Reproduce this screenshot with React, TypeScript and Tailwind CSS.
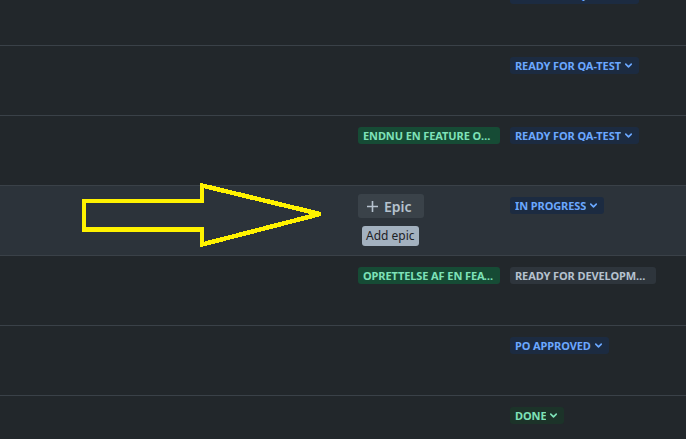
import { ChevronDown } from "lucide-react";

type Row = {
  epic?: string;
  status: string;
  tone: "blue" | "green" | "grey";
  chevron?: boolean;
  hover?: boolean;
};

const rows: Row[] = [
  { status: "Ready for QA-test", tone: "blue", chevron: true },
  { status: "Ready for QA-test", tone: "blue", chevron: true },
  { epic: "Endnu en feature omkring noget", status: "Ready for QA-test", tone: "blue", chevron: true },
  { status: "In progress", tone: "blue", chevron: true, hover: true },
  { epic: "Oprettelse af en feature", status: "Ready for development", tone: "grey" },
  { status: "PO approved", tone: "blue", chevron: true },
  { status: "Done", tone: "green", chevron: true },
];

const toneClass = {
  blue: "bg-[#1c2b41] text-[#6ba8ff]",
  green: "bg-[#1c3329] text-[#7ee2b8]",
  grey: "bg-[#2e353c] text-[#b6c2cf]",
};

function StatusLozenge({ row }: { row: Row }) {
  return (
    <span
      className={`flex h-[17px] max-w-[146px] items-center gap-[2px] rounded-[3px] px-[5px] text-[11px] font-bold uppercase leading-none tracking-[-0.1px] ${toneClass[row.tone]}`}
    >
      <span className="truncate">{row.status}</span>
      {row.chevron && <ChevronDown size={11} strokeWidth={3.5} className="shrink-0" />}
    </span>
  );
}

function EpicLozenge({ name }: { name: string }) {
  return (
    <span className="flex h-[17px] w-[142px] items-center rounded-[3px] bg-[#164b35] px-[5px] text-[11px] font-bold uppercase leading-none tracking-[-0.1px] text-[#7ee2b8]">
      <span className="truncate">{name}</span>
    </span>
  );
}

function AddEpic() {
  return (
    <div className="flex flex-col items-start">
      <button className="-mt-[3px] flex h-6 w-[66px] items-center gap-[5px] rounded-[3px] bg-[#3a4249] pl-[8px] text-[14px] font-semibold text-[#b6c2cf]">
        <svg width="13" height="13" viewBox="0 0 13 13" className="shrink-0">
          <path d="M6.5 1v11M1 6.5h11" stroke="#b6c2cf" strokeWidth="1.6" />
        </svg>
        Epic
      </button>
      <span className="ml-1 mt-2 rounded-[3px] bg-[#a3b1bf] px-[4px] py-[2px] text-[12px] leading-4 text-[#1d2125]">
        Add epic
      </span>
    </div>
  );
}

export default function App() {
  return (
    <div
      className="relative h-[439px] w-[686px] overflow-hidden bg-[#22272b]"
      style={{ fontFamily: '"Noto Sans", "Open Sans", sans-serif' }}
    >
      <div className="-mt-[24px]">
        {rows.map((row, i) => (
          <div
            key={i}
            className={`grid h-[70px] grid-cols-[358px_152px_1fr] border-b border-[#3a4148] pt-[11px] ${
              row.hover ? "bg-[#2c333a]" : ""
            }`}
          >
            <div />
            <div className="flex items-start">
              {row.epic && <EpicLozenge name={row.epic} />}
              {row.hover && <AddEpic />}
            </div>
            <div className="flex items-start">
              <StatusLozenge row={row} />
            </div>
          </div>
        ))}
      </div>

      <svg
        className="pointer-events-none absolute left-0 top-0"
        width="686"
        height="439"
        shapeRendering="crispEdges"
      >
        <polygon
          points="84,201 202,201 202,185.5 320,214 202,244.5 202,229.5 84,229.5"
          fill="none"
          stroke="#fff200"
          strokeWidth="4.5"
          strokeLinejoin="miter"
        />
      </svg>
    </div>
  );
}
